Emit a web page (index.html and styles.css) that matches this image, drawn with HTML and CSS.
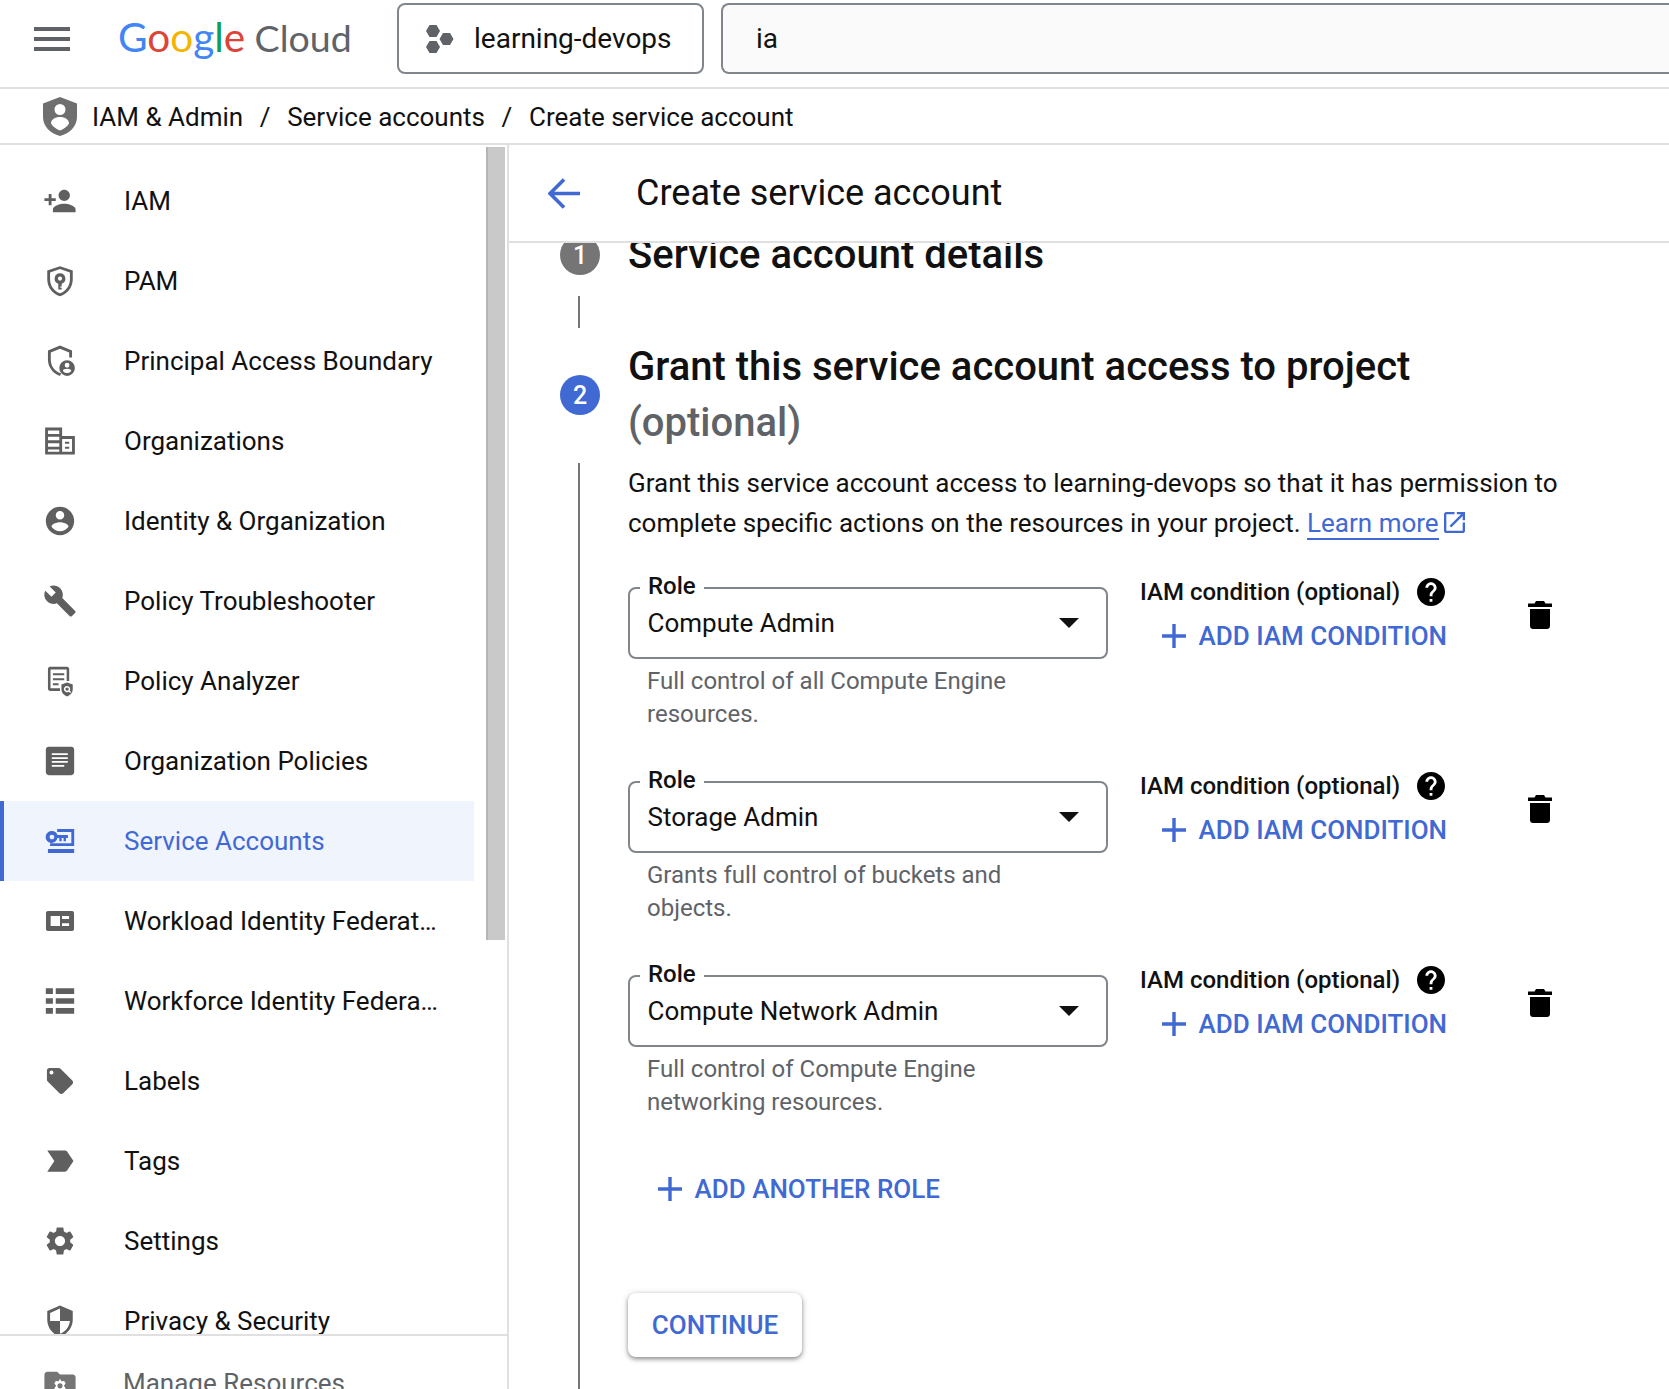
FILE: index.html
```html
<!DOCTYPE html>
<html lang="en">
<head>
  <meta charset="UTF-8">
  <title>Create service account</title>
  <link rel="stylesheet" href="styles.css">
</head>
<body>
<svg class="sprite" aria-hidden="true">
  <symbol id="i-plus" viewBox="5 5 14 14"><path d="M19 13h-6v6h-2v-6H5v-2h6V5h2v6h6v2z"/></symbol>
  <symbol id="i-help" viewBox="2 2 20 20"><path d="M12 2C6.48 2 2 6.48 2 12s4.48 10 10 10 10-4.48 10-10S17.52 2 12 2zm1 17h-2v-2h2v2zm2.07-7.75l-.9.92C13.45 12.9 13 13.5 13 15h-2v-.5c0-1.1.45-2.1 1.17-2.83l1.24-1.26c.37-.36.59-.86.59-1.41 0-1.1-.9-2-2-2s-2 .9-2 2H8c0-2.21 1.79-4 4-4s4 1.79 4 4c0 .88-.36 1.68-.93 2.25z"/></symbol>
  <symbol id="i-trash" viewBox="0 0 24 28"><path d="M8 0h8l1.500 2.500H24v3.500H0V2.500h6.500zM2 8h20v17c0 1.700-1.300 3-3 3H5c-1.700 0-3-1.300-3-3z"/></symbol>
</svg>

<!-- top bar -->
<header class="topbar">
  <svg class="menu-icon" viewBox="0 0 36 24"><path d="M0 0h36v4H0zM0 10h36v4H0zM0 20h36v4H0z"/></svg>
  <div class="logo"><span class="lb">G</span><span class="lr">o</span><span class="ly">o</span><span class="lb">g</span><span class="lg">l</span><span class="lr">e</span> <span class="lc">Cloud</span></div>
  <div class="project">
    <svg class="hex-icon" viewBox="0 0 26 28"><path d="M2.500 0h7L13 6l-3.500 6h-7L-1 6zM2.500 16h7l3.500 6-3.500 6h-7L-1 22zM16 8h7l3.500 6-3.500 6h-7l-3.500-6z"/></svg>
    learning-devops
  </div>
  <div class="search">ia</div>
</header>

<nav class="crumbs">
  <svg class="crumb-shield" viewBox="0 0 34 39"><path fill-rule="evenodd" d="M17 0l17 6.500V20c0 9-7 16.500-17 19C7 36.500 0 29 0 20V6.500zM17 7a5.500 5.500 0 1 0 0 11 5.500 5.500 0 0 0 0-11zM17 20c-5 0-9 2.500-9 6.500 1.800 3 5 5.500 9 7 4-1.500 7.200-4 9-7 0-4-4-6.500-9-6.500z"/></svg>
  <span>IAM &amp; Admin</span><span class="sep">/</span><span>Service accounts</span><span class="sep">/</span><span>Create service account</span>
</nav>

<div class="main">
  <aside class="sidebar">
    <div class="side-top">
      <ul class="nav">
        <li class="nav-item"><svg viewBox="0 0 24 24"><path d="M15 12c2.210 0 4-1.790 4-4s-1.790-4-4-4-4 1.790-4 4 1.790 4 4 4zm-9-2V7H4v3H1v2h3v3h2v-3h3v-2H6zm9 4c-2.670 0-8 1.340-8 4v2h16v-2c0-2.660-5.330-4-8-4z"/></svg>IAM</li>
        <li class="nav-item"><svg viewBox="0 0 24 24"><path fill-rule="evenodd" d="M12 1.500L3 4.500V11c0 5.500 3.800 10.300 9 11.800 5.200-1.500 9-6.300 9-11.800V4.500zM12 3.600l7 2.400V11c0 4.500-3 8.400-7 9.700-4-1.300-7-5.200-7-9.700V6zM12 6.500a3.800 3.800 0 0 0-1.200 7.400V18h2.400v-1.200h-1v-1h1v-1.900A3.800 3.800 0 0 0 12 6.500zm0 2.300a1.500 1.500 0 1 1 0 3 1.500 1.500 0 0 1 0-3z"/></svg>PAM</li>
        <li class="nav-item"><svg viewBox="0 0 24 24"><path d="M12 1L3.500 4.500V11c0 5 3 9.700 8.500 11.500l.8-1.800C8 19.500 5.500 15.500 5.500 11V6l6.500-2.700L18.500 6v3.500h2V4.500z"/><path fill-rule="evenodd" d="M17 11.500a5.500 5.500 0 1 0 0 11 5.500 5.500 0 0 0 0-11zm0 1.800a1.700 1.700 0 1 1 0 3.400 1.700 1.700 0 0 1 0-3.400zm0 4.200c1.500 0 3 .6 3 1.500-.7.9-1.800 1.500-3 1.500s-2.300-.6-3-1.500c0-.9 1.500-1.500 3-1.500z"/></svg>Principal Access Boundary</li>
        <li class="nav-item"><svg viewBox="0 0 24 24"><path fill-rule="evenodd" d="M1.500 2.500h12v6h9v13h-21zM3.500 4.500V7h8V4.500zM3.500 9v2.500h8V9zM3.500 13.500V16h8v-2.500zM3.500 18v1.500h8V18zM13.500 10.500v9h7v-9zM15.500 12.500h3v1.500h-3zM15.500 16h3v1.500h-3z"/></svg>Organizations</li>
        <li class="nav-item"><svg viewBox="0 0 24 24"><path d="M12 2C6.480 2 2 6.480 2 12s4.480 10 10 10 10-4.480 10-10S17.520 2 12 2zm0 3c1.660 0 3 1.340 3 3s-1.340 3-3 3-3-1.340-3-3 1.340-3 3-3zm0 14.200c-2.500 0-4.710-1.280-6-3.220.030-1.990 4-3.080 6-3.080 1.990 0 5.970 1.090 6 3.080-1.290 1.940-3.500 3.220-6 3.220z"/></svg>Identity &amp; Organization</li>
        <li class="nav-item"><svg viewBox="0 0 24 24"><path d="M22.700 19l-9.100-9.100c.9-2.300.4-5-1.500-6.900-2-2-5-2.400-7.400-1.300L9 6 6 9 1.600 4.700C.4 7.100.9 10.100 2.900 12.100c1.900 1.900 4.600 2.400 6.900 1.500l9.100 9.100c.4.400 1 .4 1.400 0l2.300-2.300c.5-.4.5-1.100.1-1.400z"/></svg>Policy Troubleshooter</li>
        <li class="nav-item"><svg viewBox="0 0 24 24"><path fill-rule="evenodd" d="M5 2h12c.8 0 1.500.7 1.500 1.500V12h-1.800V3.800H5.300v13.400H12V19H5c-.8 0-1.500-.7-1.500-1.500v-14C3.500 2.700 4.200 2 5 2z"/><path d="M7 6.500h8v1.500H7zM7 10h8v1.500H7zM7 13.500h4V15H7z"/><path fill-rule="evenodd" d="M17 13l4 1.500v3.500c0 2.300-1.700 4-4 5-2.300-1-4-2.700-4-5v-3.500zm0 2.500a2.200 2.200 0 1 0 1.200 4l1 1 .7-.7-1-1a2.200 2.200 0 0 0-1.900-3.300zm0 1a1.200 1.200 0 1 1 0 2.400 1.200 1.200 0 0 1 0-2.400z"/></svg>Policy Analyzer</li>
        <li class="nav-item"><svg viewBox="0 0 24 24"><path fill-rule="evenodd" d="M4 2h16c1.100 0 2 .9 2 2v16c0 1.100-.9 2-2 2H4c-1.100 0-2-.9-2-2V4c0-1.100.9-2 2-2zM6.200 6.600v1.200h11.300V6.600zM6.200 9.400v1.200h11.300V9.400zM6.200 12v1.200h11.300V12zM6.200 14.800V16h8.800v-1.200z"/></svg>Organization Policies</li>
        <li class="nav-item is-active"><svg viewBox="0 0 24 24"><path fill-rule="evenodd" d="M6.300 5a4.200 4.200 0 0 1 3.900 2.800h7.400v2.100h-1.400v2.300h-1.700V9.900h-1.300v2.300h-1.700V9.900h-1.300a4.200 4.200 0 1 1-3.900-4.900zm0 2.500a1.700 1.700 0 1 0 0 3.400 1.700 1.700 0 0 0 0-3.400z"/><path d="M10 3.500h12v12H5v-2h15V5.600H10zM3.500 17.700H22v2.800H3.500z"/></svg>Service Accounts</li>
        <li class="nav-item"><svg viewBox="0 0 24 24"><path fill-rule="evenodd" d="M3.500 4.900h17c.8 0 1.400.6 1.400 1.400v11.400c0 .8-.6 1.400-1.400 1.400h-17c-.8 0-1.400-.6-1.400-1.400V6.300c0-.8.6-1.400 1.400-1.400zM5.400 8.500v7H12v-7zM13.400 8.500V10.500h5V8.500zM13.400 13.500v2h5v-2z"/></svg>Workload Identity Federat…</li>
        <li class="nav-item"><svg viewBox="0 0 24 24"><path d="M2 3h5v4H2zM9 3h13v4H9zM2 10h5v4H2zM9 10h13v4H9zM2 17h5v4H2zM9 17h13v4H9z"/></svg>Workforce Identity Federa…</li>
        <li class="nav-item"><svg viewBox="-1 -1 26 26"><path d="M21.410 11.580l-9-9C12.050 2.220 11.550 2 11 2H4c-1.100 0-2 .9-2 2v7c0 .55.22 1.050.59 1.420l9 9c.36.36.86.58 1.410.58.55 0 1.050-.22 1.410-.59l7-7c.37-.36.59-.86.59-1.410 0-.55-.23-1.060-.59-1.420zM5.500 7C4.670 7 4 6.330 4 5.500S4.670 4 5.500 4 7 4.670 7 5.500 6.330 7 5.500 7z"/></svg>Labels</li>
        <li class="nav-item"><svg viewBox="0 0 24 24"><path d="M3 4.500h12.500c.6 0 1.100.3 1.500.8L21.500 12 17 18.700c-.4.5-.9.8-1.500.8H3L8 12z"/></svg>Tags</li>
        <li class="nav-item"><svg viewBox="0 0 24 24"><path d="M19.140 12.940c.04-.3.06-.61.06-.94 0-.32-.02-.64-.07-.94l2.030-1.580a.49.49 0 0 0 .12-.61l-1.920-3.320a.488.488 0 0 0-.59-.22l-2.390.96c-.5-.38-1.030-.7-1.620-.94l-.36-2.540a.484.484 0 0 0-.48-.41h-3.840c-.24 0-.43.17-.47.41l-.36 2.540c-.59.24-1.130.57-1.620.94l-2.390-.96c-.22-.08-.47 0-.59.22L2.740 8.870c-.12.21-.08.47.12.61l2.030 1.580c-.05.3-.09.63-.09.94s.02.64.07.94l-2.030 1.580a.49.49 0 0 0-.12.61l1.920 3.320c.12.22.37.29.59.22l2.390-.96c.5.38 1.030.7 1.620.94l.36 2.540c.05.24.24.41.48.41h3.840c.24 0 .44-.17.47-.41l.36-2.540c.59-.24 1.130-.56 1.620-.94l2.390.96c.22.08.47 0 .59-.22l1.920-3.320c.12-.22.07-.47-.12-.61l-2.010-1.580zM12 15.600c-1.980 0-3.600-1.620-3.600-3.600s1.620-3.600 3.600-3.600 3.600 1.620 3.600 3.600-1.620 3.600-3.600 3.600z"/></svg>Settings</li>
        <li class="nav-item"><svg viewBox="0 0 24 24"><path d="M12 1L3 5v6c0 5.550 3.840 10.740 9 12 5.160-1.260 9-6.450 9-12V5l-9-4zm0 10.990h7c-.53 4.120-3.280 7.790-7 8.940V12H5V6.300l7-3.110v8.800z"/></svg>Privacy &amp; Security</li>
      </ul>
      <div class="scrollbar"><div class="thumb"></div></div>
    </div>
    <div class="side-bottom">
      <div class="nav-item is-muted"><svg viewBox="0 0 24 24"><path fill-rule="evenodd" d="M3 4h7l2 2h9c1 0 2 .9 2 2v10c0 1-1 2-2 2H3c-1 0-2-1-2-2V6c0-1 1-2 2-2zm9 5l-1 1.800-2-.3-1 1.800 1.300 1.700L8 15.700l1 1.800 2-.3 1 1.800 1-1.800 2 .3 1-1.800-1.300-1.700 1.300-1.700-1-1.800-2 .3zm0 3.200a1.800 1.800 0 1 1 0 3.600 1.800 1.800 0 0 1 0-3.600z"/></svg>Manage Resources</div>
    </div>
  </aside>

  <section class="content">
    <div class="subheader">
      <svg class="back" viewBox="0 0 32 31"><path d="M32 15.500H3M16 1.500l-14 14 14 14"/></svg>
      <h1>Create service account</h1>
    </div>

    <div class="stepper">
      <div class="step-done">
        <div class="rail"><span class="step-num">1</span></div>
        <h2>Service account details</h2>
      </div>
      <div class="connector"></div>

      <div class="step-head">
        <div class="rail"><span class="step-num is-current">2</span></div>
        <h2>Grant this service account access to project <span class="optional">(optional)</span></h2>
      </div>

      <div class="step-body">
        <div class="rail-line"></div>
        <div class="body-col">
          <p class="intro">Grant this service account access to learning-devops so that it has permission to complete specific actions on the resources in your project. <a class="link">Learn more</a><svg class="ext" viewBox="3 3 18 18"><path d="M19 19H5V5h7V3H5c-1.110 0-2 .9-2 2v14c0 1.100.89 2 2 2h14c1.100 0 2-.9 2-2v-7h-2v7zM14 3v2h3.590l-9.830 9.830 1.410 1.410L19 6.410V10h2V3h-7z"/></svg></p>

          <div class="role-row">
            <div class="role-col">
              <div class="select"><label>Role</label>Compute Admin<span class="caret"></span></div>
              <p class="help">Full control of all Compute Engine resources.</p>
            </div>
            <div class="cond-col">
              <div class="cond-label">IAM condition (optional)<svg class="help-icon"><use href="#i-help"/></svg></div>
              <div class="text-btn cond-btn"><svg><use href="#i-plus"/></svg>ADD IAM CONDITION</div>
            </div>
            <svg class="trash"><use href="#i-trash"/></svg>
          </div>

          <div class="role-row">
            <div class="role-col">
              <div class="select"><label>Role</label>Storage Admin<span class="caret"></span></div>
              <p class="help">Grants full control of buckets and objects.</p>
            </div>
            <div class="cond-col">
              <div class="cond-label">IAM condition (optional)<svg class="help-icon"><use href="#i-help"/></svg></div>
              <div class="text-btn cond-btn"><svg><use href="#i-plus"/></svg>ADD IAM CONDITION</div>
            </div>
            <svg class="trash"><use href="#i-trash"/></svg>
          </div>

          <div class="role-row">
            <div class="role-col">
              <div class="select"><label>Role</label>Compute Network Admin<span class="caret"></span></div>
              <p class="help">Full control of Compute Engine networking resources.</p>
            </div>
            <div class="cond-col">
              <div class="cond-label">IAM condition (optional)<svg class="help-icon"><use href="#i-help"/></svg></div>
              <div class="text-btn cond-btn"><svg><use href="#i-plus"/></svg>ADD IAM CONDITION</div>
            </div>
            <svg class="trash"><use href="#i-trash"/></svg>
          </div>

          <div class="text-btn add-role"><svg><use href="#i-plus"/></svg>ADD ANOTHER ROLE</div>
          <button class="continue">CONTINUE</button>
        </div>
      </div>
    </div>
  </section>
</div>
</body>
</html>
```

FILE: styles.css
```css
* {
  box-sizing: border-box;
}
html, body {
  height: 100%;
}
body {
  margin: 0;
  width: 1669px;
  height: 1389px;
  overflow: hidden;
  display: flex;
  flex-direction: column;
  background: #fff;
  color: #111;
  font-family: Roboto, "Liberation Sans", sans-serif;
  font-size: 26px;
}
.sprite {
  display: none;
}

/* top bar */
.topbar {
  flex: none;
  height: 89px;
  padding-top: 3px;
  border-bottom: 2px solid #e0e0e0;
  display: flex;
  align-items: flex-start;
}
.menu-icon {
  width: 36px;
  height: 24px;
  margin: 24px 0 0 34px;
  fill: #5f6368;
  flex: none;
}
.logo {
  flex: none;
  width: 279px;
  margin-left: 48px;
  height: 71px;
  line-height: 68px;
  font-family: Lato, Roboto, sans-serif;
  font-size: 40.500px;
  white-space: nowrap;
}
.lb { color: #4285f4; }
.lr { color: #db4437; }
.ly { color: #f4b400; }
.lg { color: #0f9d58; }
.lc { color: #5f6368; font-size: 37.500px; margin-left: -1px; }
.project {
  flex: none;
  width: 307px;
  height: 71px;
  border: 2px solid #80868b;
  border-radius: 8px;
  display: flex;
  align-items: center;
  padding-left: 28px;
  gap: 21px;
  font-size: 28px;
}
.hex-icon {
  width: 26px;
  height: 28px;
  fill: #5f6368;
  overflow: visible;
}
/* runs off the right edge in the screenshot, so no right side here */
.search {
  flex: 1;
  min-width: 0;
  height: 71px;
  margin-left: 17px;
  padding-left: 33px;
  border: 2px solid #80868b;
  border-right: 0;
  border-radius: 8px 0 0 8px;
  background: #fafafa;
  line-height: 67px;
  font-size: 28px;
}

/* breadcrumb */
.crumbs {
  flex: none;
  height: 56px;
  padding-top: 2px;
  border-bottom: 2px solid #e0e0e0;
  display: flex;
  align-items: center;
  padding-left: 43px;
}
.crumb-shield {
  width: 34px;
  height: 39px;
  margin: -2px 15px 0 0;
  fill: #6f6f6f;
}
.sep {
  width: 44px;
  text-align: center;
}

.main {
  flex: 1;
  min-height: 0;
  display: flex;
}

/* sidebar */
.sidebar {
  flex: none;
  width: 509px;
  border-right: 2px solid #e0e0e0;
  display: flex;
  flex-direction: column;
}
.side-top {
  height: 1191px;
  flex: none;
  overflow: hidden;
  display: flex;
  border-bottom: 2px solid #e0e0e0;
}
.nav {
  list-style: none;
  margin: 0;
  padding: 16px 0 0;
  width: 474px;
  flex: none;
}
.nav-item {
  height: 80px;
  padding-left: 43px;
  display: flex;
  align-items: center;
  gap: 47px;
  white-space: nowrap;
}
.nav-item svg {
  width: 34px;
  height: 34px;
  flex: none;
  fill: #5f5f5f;
}
.nav-item.is-active {
  background: #f0f4fd;
  color: #4169d4;
  box-shadow: inset 4px 0 0 #4169d4;
}
.nav-item.is-active svg {
  fill: #4169d4;
}
.nav-item.is-muted {
  color: #5f6368;
  gap: 46px;
}
.nav-item.is-muted svg {
  fill: #757575;
}
.scrollbar {
  flex: none;
  width: 19px;
  margin-left: 12px;
  padding-top: 2px;
}
.thumb {
  height: 793px;
  background: #c9c9c9;
  border-left: 2px solid #b5b5b5;
}
.side-bottom {
  flex: 1;
  min-height: 0;
  overflow: hidden;
  padding-top: 7px;
}

/* content */
.content {
  flex: 1;
  min-width: 0;
  display: flex;
  flex-direction: column;
}
.subheader {
  flex: none;
  height: 98px;
  border-bottom: 2px solid #e0e0e0;
  display: flex;
  align-items: center;
  padding-left: 39px;
}
.back {
  width: 32px;
  height: 31px;
  margin-right: 56px;
  fill: none;
  stroke: #4169d4;
  stroke-width: 3.600;
}
h1 {
  margin: 0;
  font-size: 36px;
  font-weight: 400;
}
.stepper {
  flex: 1;
  min-height: 0;
  overflow: hidden;
}
.step-done, .step-head {
  display: flex;
  align-items: center;
}
.step-done {
  margin-top: -8px;
  height: 40px;
}
.rail {
  flex: none;
  width: 119px;
  padding-left: 51px;
}
.step-num {
  display: flex;
  width: 40px;
  height: 40px;
  border-radius: 50%;
  align-items: center;
  justify-content: center;
  background: #757575;
  color: #fff;
  font-size: 25px;
  font-weight: 500;
}
.step-num.is-current {
  background: #4169d4;
}
h2 {
  margin: 0;
  font-size: 40px;
  font-weight: 500;
  line-height: 56px;
}
.optional {
  display: block;
  color: #5f6368;
}
.connector {
  width: 2px;
  height: 32px;
  margin: 21px 0 11px 69px;
  background: #757575;
}
.step-body {
  display: flex;
  margin-top: 12px;
}
.rail-line {
  flex: none;
  width: 119px;
  height: 1000px;
}
.rail-line::before {
  content: "";
  display: block;
  width: 2px;
  height: 100%;
  margin-left: 69px;
  background: #757575;
}
.body-col {
  flex: 1;
  min-width: 0;
}
.intro {
  margin: 0;
  width: 950px;
  line-height: 40px;
}
.link {
  color: #4169d4;
  border-bottom: 2px solid #4169d4;
}
.ext {
  width: 21px;
  height: 21px;
  margin-left: 5px;
  fill: #4169d4;
  vertical-align: -1px;
}
.role-row {
  display: flex;
  align-items: flex-start;
  height: 194.2px;
}
.intro + .role-row {
  margin-top: 33px;
}
.role-col {
  flex: none;
  width: 480px;
  padding-top: 11px;
}
.select {
  position: relative;
  height: 72px;
  border: 2px solid #80868b;
  border-radius: 8px;
  padding-left: 17.500px;
  display: flex;
  align-items: center;
}
.select label {
  position: absolute;
  top: -18px;
  left: 10px;
  padding: 0 8px;
  background: #fff;
  font-size: 24px;
  font-weight: 500;
  line-height: 30px;
}
.caret {
  position: absolute;
  right: 27px;
  top: 29px;
  width: 0;
  height: 0;
  border-left: 10px solid transparent;
  border-right: 10px solid transparent;
  border-top: 10px solid #111;
}
.help {
  margin: 6px 0 0;
  padding: 0 40px 0 19px;
  color: #5f6368;
  font-size: 24px;
  line-height: 32.500px;
}
.cond-col {
  flex: none;
  width: 388px;
  margin-left: 32px;
}
.cond-label {
  display: flex;
  align-items: center;
  height: 32px;
  font-size: 24px;
  font-weight: 500;
}
.help-icon {
  width: 28px;
  height: 28px;
  margin-left: 17px;
  fill: #000;
}
.text-btn {
  display: flex;
  align-items: center;
  height: 48px;
  color: #4169d4;
  font-weight: 500;
  gap: 12.500px;
  white-space: nowrap;
}
.text-btn svg {
  width: 24px;
  height: 24px;
  fill: #4169d4;
}
.cond-btn {
  margin: 4px 0 0 22px;
}
.add-role {
  margin: 6px 0 0 30px;
}
.trash {
  flex: none;
  width: 24px;
  height: 28px;
  margin-top: 25px;
  fill: #000;
}
.continue {
  display: block;
  width: 174px;
  height: 64px;
  margin: 80px 0 0 0;
  border: 0;
  border-radius: 8px;
  background: #fff;
  color: #4169d4;
  font: 500 26px Roboto, sans-serif;
  box-shadow: 0 2px 4px rgba(0, 0, 0, .4), 0 1px 8px rgba(0, 0, 0, .12);
}
```
